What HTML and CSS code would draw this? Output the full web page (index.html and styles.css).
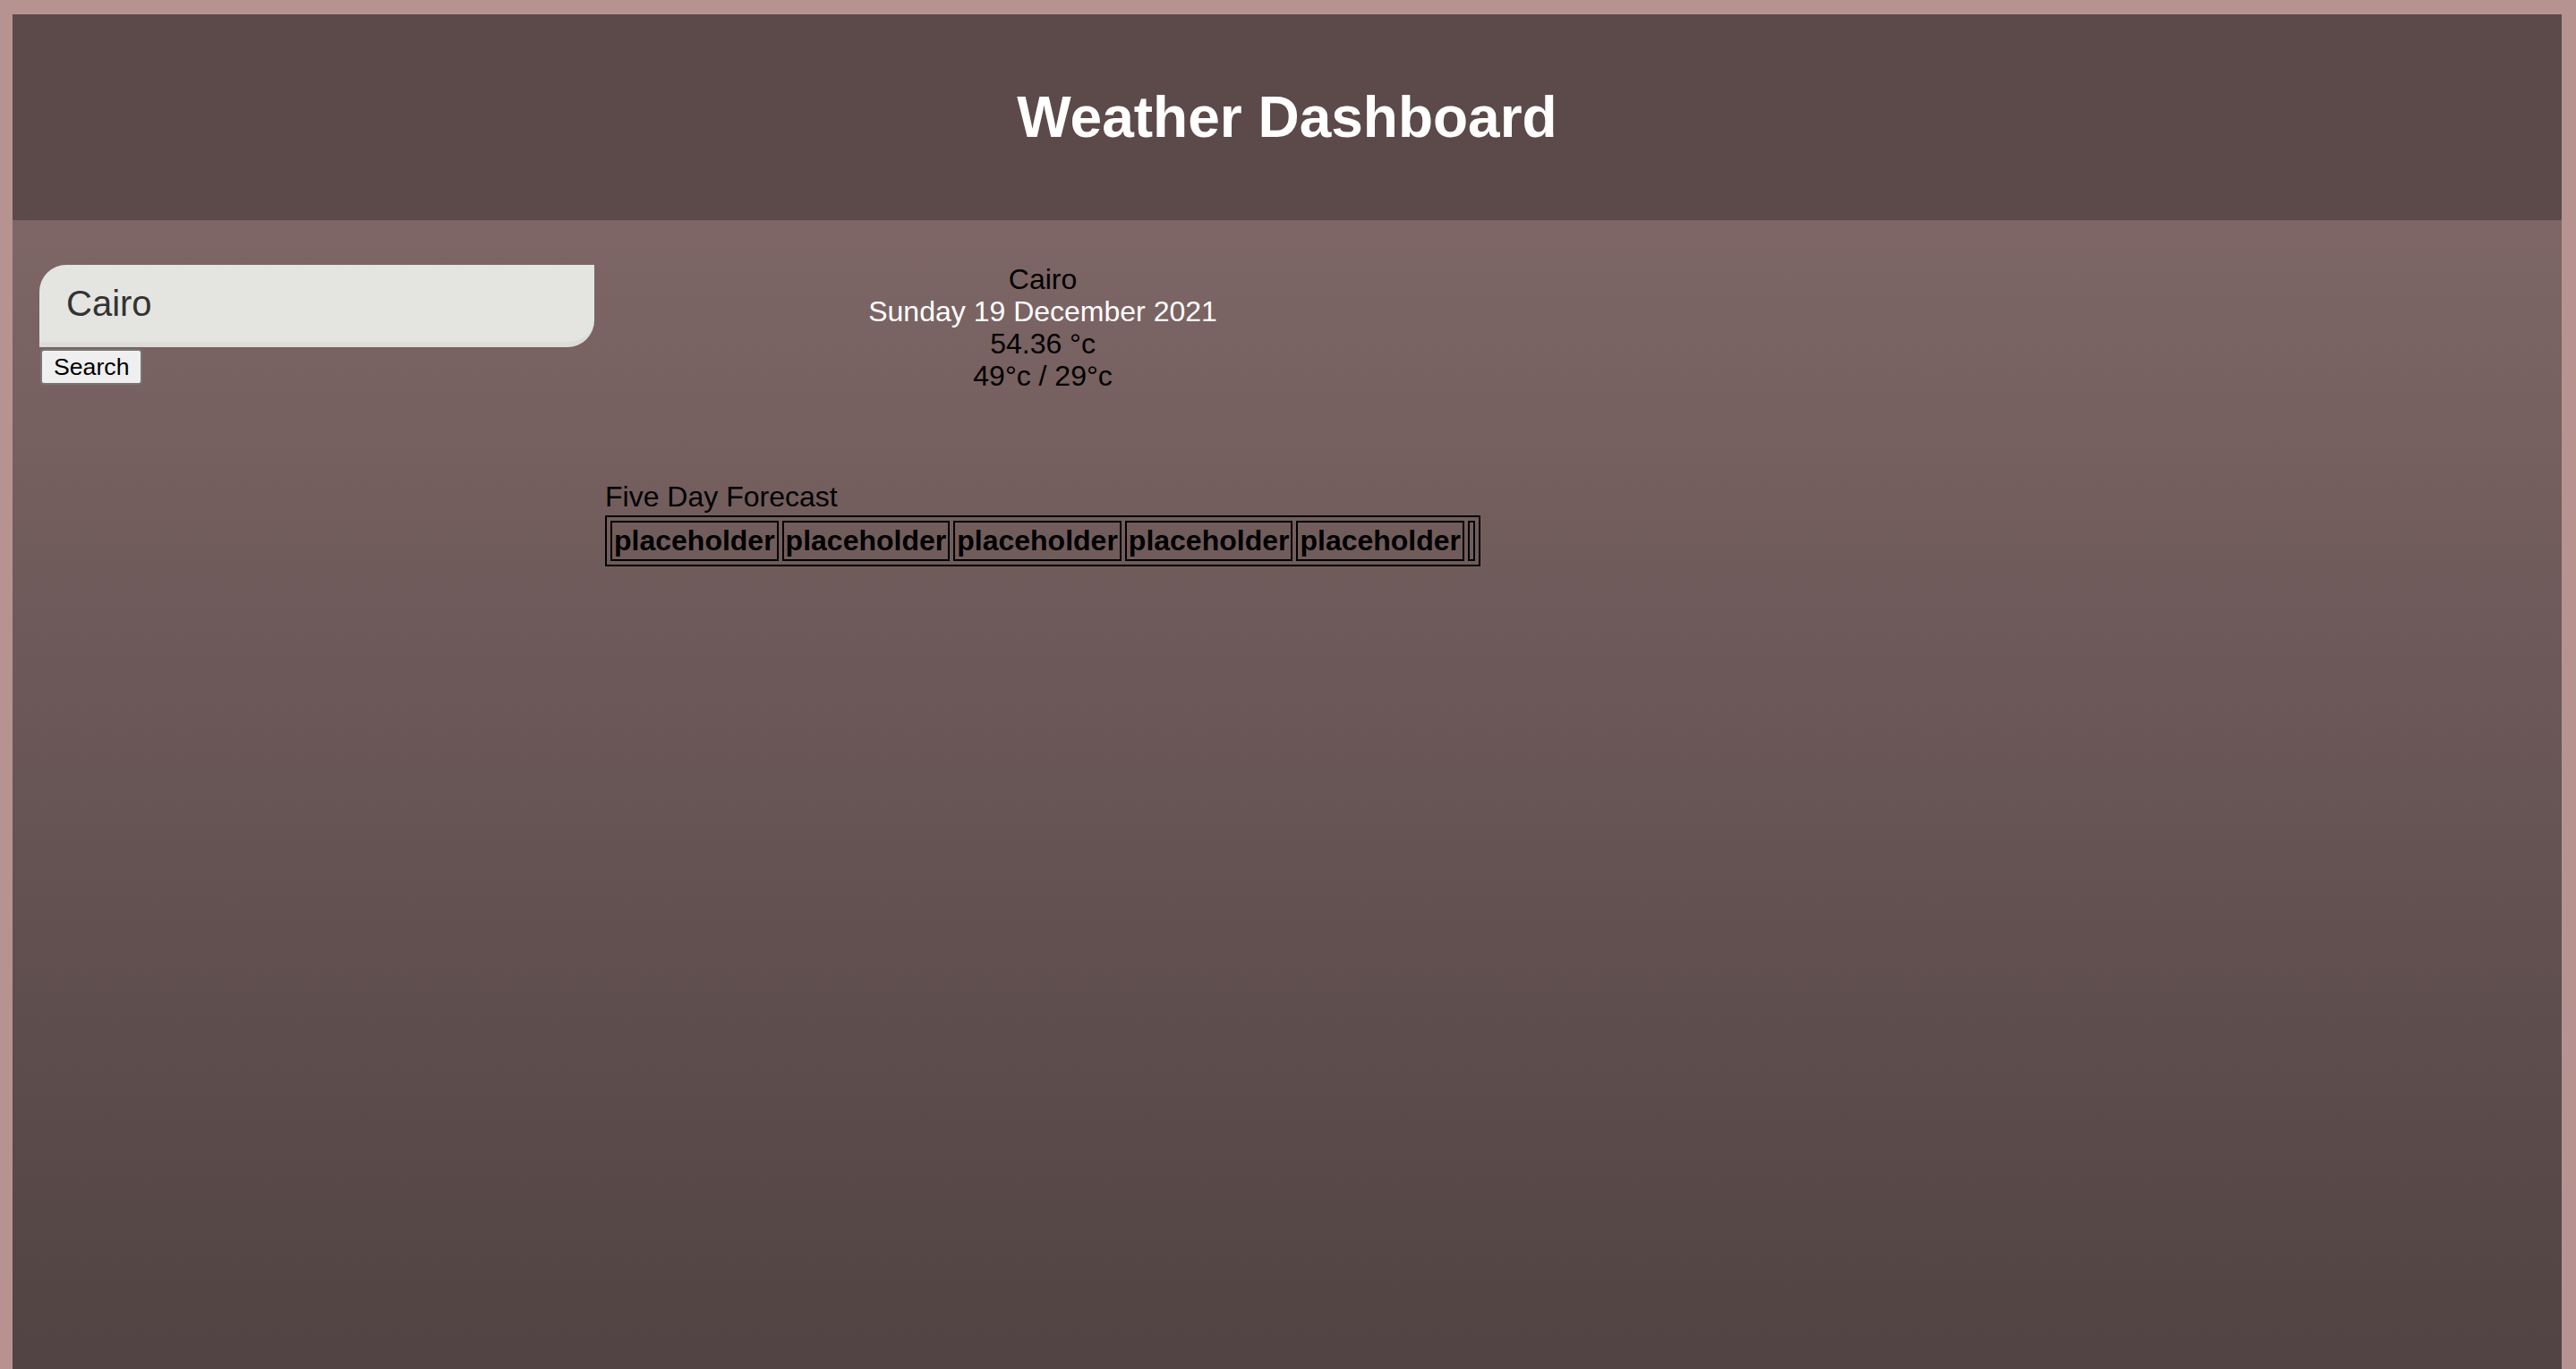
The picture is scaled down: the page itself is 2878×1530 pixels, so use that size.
FILE: index.html
```html
<!DOCTYPE html>
<html lang="en">
<head>
<meta charset="utf-8">
<title>Weather Dashboard</title>
<link rel="stylesheet" href="styles.css">
</head>
<body>
<header class="top">
  <h1 class="title">Weather Dashboard</h1>
</header>
<main class="main">
  <section class="search">
    <input class="city" type="text" value="Cairo">
    <button class="btn" type="button">Search</button>
  </section>
  <section class="content">
    <div class="current">
      <div class="line">Cairo</div>
      <div class="line date">Sunday 19 December 2021</div>
      <div class="line">54.36 °c</div>
      <div class="line">49°c / 29°c</div>
    </div>
    <div class="forecast">
      <div class="ftitle">Five Day Forecast</div>
      <table class="ftable">
        <tr>
          <th>placeholder</th>
          <th>placeholder</th>
          <th>placeholder</th>
          <th>placeholder</th>
          <th>placeholder</th>
          <td></td>
        </tr>
      </table>
    </div>
  </section>
</main>
</body>
</html>
```
FILE: styles.css
```css
html {
  background: #b69391;
}
body {
  margin: 16px 16px 0 14px;
  font-family: "Liberation Sans", Arial, sans-serif;
  color: #000;
}
.top {
  height: 230px;
  background: #5c4a4a;
  display: flex;
  align-items: center;
  justify-content: center;
}
.title {
  margin: 0;
  font-size: 64px;
  font-weight: bold;
  color: #fff;
}
.main {
  display: flex;
  align-items: flex-start;
  gap: 12px;
  padding: 48px 30px 0 30px;
  height: 1284px;
  box-sizing: border-box;
  background: linear-gradient(#7e6666, #514343);
}
.search {
  display: flex;
  flex-direction: column;
  align-items: flex-start;
  width: 620px;
  padding-top: 2px;
}
.city {
  width: 620px;
  height: 92px;
  box-sizing: border-box;
  margin: 0;
  border: none;
  border-bottom: 6px solid #dcdcd9;
  background: #e4e5e0;
  border-radius: 30px 0 30px 0;
  padding: 0 30px;
  font-family: "Liberation Sans", Arial, sans-serif;
  font-size: 40px;
  color: #333;
  outline: none;
}
.btn {
  margin: 2px 0 0 1px;
  height: 40px;
  padding: 0 13px;
  font-family: "Liberation Sans", Arial, sans-serif;
  font-size: 26.67px;
  color: #000;
  background: #efefef;
  border: 2px solid #767676;
  border-radius: 4px;
}
.content {
  width: max-content;
}
.current {
  text-align: center;
  font-size: 32px;
  line-height: 36px;
}
.date {
  color: #fff;
}
.forecast {
  margin-top: 99px;
}
.ftitle {
  font-size: 32px;
  margin-bottom: 2px;
}
.ftable {
  border: 2px solid #000;
  border-spacing: 4px;
}
.ftable th,
.ftable td {
  border: 2px solid #000;
  padding: 2px;
  font-size: 32px;
  font-weight: bold;
}
```
